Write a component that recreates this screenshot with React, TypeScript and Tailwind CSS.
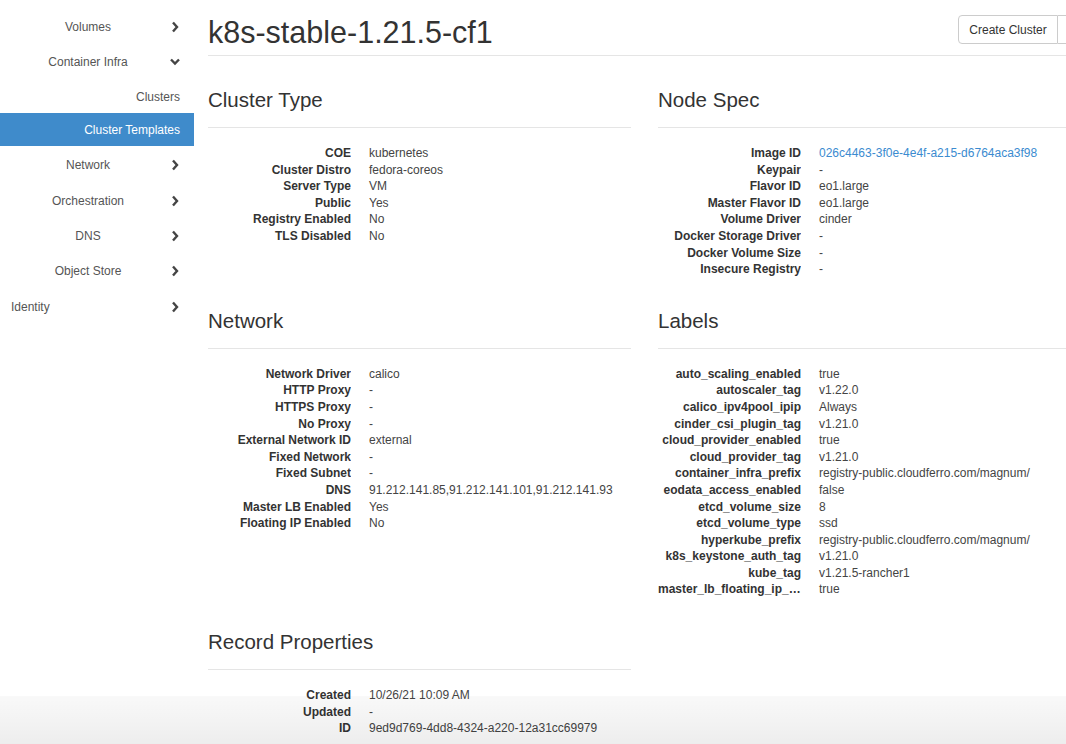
import React from 'react';

type Row = [string, string, boolean?];

const clusterType: Row[] = [
  ['COE', 'kubernetes'],
  ['Cluster Distro', 'fedora-coreos'],
  ['Server Type', 'VM'],
  ['Public', 'Yes'],
  ['Registry Enabled', 'No'],
  ['TLS Disabled', 'No'],
];

const nodeSpec: Row[] = [
  ['Image ID', '026c4463-3f0e-4e4f-a215-d6764aca3f98', true],
  ['Keypair', '-'],
  ['Flavor ID', 'eo1.large'],
  ['Master Flavor ID', 'eo1.large'],
  ['Volume Driver', 'cinder'],
  ['Docker Storage Driver', '-'],
  ['Docker Volume Size', '-'],
  ['Insecure Registry', '-'],
];

const network: Row[] = [
  ['Network Driver', 'calico'],
  ['HTTP Proxy', '-'],
  ['HTTPS Proxy', '-'],
  ['No Proxy', '-'],
  ['External Network ID', 'external'],
  ['Fixed Network', '-'],
  ['Fixed Subnet', '-'],
  ['DNS', '91.212.141.85,91.212.141.101,91.212.141.93'],
  ['Master LB Enabled', 'Yes'],
  ['Floating IP Enabled', 'No'],
];

const labels: Row[] = [
  ['auto_scaling_enabled', 'true'],
  ['autoscaler_tag', 'v1.22.0'],
  ['calico_ipv4pool_ipip', 'Always'],
  ['cinder_csi_plugin_tag', 'v1.21.0'],
  ['cloud_provider_enabled', 'true'],
  ['cloud_provider_tag', 'v1.21.0'],
  ['container_infra_prefix', 'registry-public.cloudferro.com/magnum/'],
  ['eodata_access_enabled', 'false'],
  ['etcd_volume_size', '8'],
  ['etcd_volume_type', 'ssd'],
  ['hyperkube_prefix', 'registry-public.cloudferro.com/magnum/'],
  ['k8s_keystone_auth_tag', 'v1.21.0'],
  ['kube_tag', 'v1.21.5-rancher1'],
  ['master_lb_floating_ip_enabled', 'true'],
];

const record: Row[] = [
  ['Created', '10/26/21 10:09 AM'],
  ['Updated', '-'],
  ['ID', '9ed9d769-4dd8-4324-a220-12a31cc69979'],
];

// small bold chevrons like the font-awesome ones in the sidebar
const Chevron = ({ down }: { down?: boolean }) => (
  <svg width="10" height="12" viewBox="0 0 10 12" className="shrink-0 -ml-[6px]">
    {down ? (
      <polyline points="1,3.5 5,7.5 9,3.5" fill="none" stroke="#444" strokeWidth="2.4" />
    ) : (
      <polyline points="3,1.5 7,6 3,10.5" fill="none" stroke="#444" strokeWidth="2.4" />
    )}
  </svg>
);

const NavGroup = ({ label, open, h = 'h-[35px]' }: { label: string; open?: boolean; h?: string }) => (
  <div className={`flex items-center ${h}`}>
    <span className="w-[176px] text-center">{label}</span>
    <Chevron down={open} />
  </div>
);

const Section = ({ title, rows }: { title: string; rows: Row[] }) => (
  <div className="pt-[32px]">
    <h3 className="text-[20.5px] leading-[24px] text-[#333] pb-[15px] border-b border-[#e5e5e5]">
      {title}
    </h3>
    <dl className="mt-[17px] text-[12px] leading-[16.6px]">
      {rows.map(([k, v, link]) => (
        <div key={k} className="flex">
          <dt className="w-[143px] shrink-0 text-right font-bold text-[#333] truncate">{k}</dt>
          <dd className={`ml-[18px] whitespace-nowrap ${link ? 'text-[#3b8bd0]' : 'text-[#444]'}`}>{v}</dd>
        </div>
      ))}
    </dl>
  </div>
);

export default function App() {
  return (
    <div
      className="relative w-[1066px] h-[744px] overflow-hidden bg-white flex"
      style={{ fontFamily: '"Liberation Sans", Arial, Helvetica, sans-serif' }}
    >
      {/* Sidebar */}
      <aside className="w-[194px] shrink-0 pt-[9px] text-[12px] text-[#555]">
        <NavGroup label="Volumes" />
        <NavGroup label="Container Infra" open h="h-[36px]" />
        <div className="h-[33px] flex items-center justify-end pr-[14px]">Clusters</div>
        <div className="h-[33px] flex items-center justify-end pr-[14px] bg-[#3f8bcb] text-white">
          Cluster Templates
        </div>
        <NavGroup label="Network" h="h-[37px]" />
        <NavGroup label="Orchestration" />
        <NavGroup label="DNS" />
        <NavGroup label="Object Store" h="h-[36px]" />
        <div className="flex items-center h-[35px]">
          <span className="w-[176px] pl-[11px]">Identity</span>
          <Chevron />
        </div>
      </aside>

      {/* Main */}
      <main className="pl-[14px] shrink-0">
        <div className="w-[873px]">
          <div className="h-[56px] border-b border-[#e5e5e5] flex items-start justify-between">
            <h1 className="mt-[14px] text-[30.5px] leading-[36px] text-[#333]">k8s-stable-1.21.5-cf1</h1>
            <div className="mt-[15px] flex text-[12px] text-[#333]">
              <button className="h-[29px] w-[100px] border border-[#ccc] rounded-l-[4px] bg-white">
                Create Cluster
              </button>
              <button className="h-[29px] w-[23px] border border-l-0 border-[#ccc] rounded-r-[4px] bg-white" />
            </div>
          </div>

          <div className="grid grid-cols-2 gap-x-[27px]">
            <Section title="Cluster Type" rows={clusterType} />
            <Section title="Node Spec" rows={nodeSpec} />
            <div className="-mt-[1px]">
              <Section title="Network" rows={network} />
            </div>
            <div className="-mt-[1px]">
              <Section title="Labels" rows={labels} />
            </div>
            <div>
              <Section title="Record Properties" rows={record} />
            </div>
          </div>
        </div>
      </main>

      {/* bottom footer shade */}
      <div className="absolute left-0 right-0 bottom-0 h-[48px] pointer-events-none bg-gradient-to-b from-black/[0.025] to-black/[0.07]" />
    </div>
  );
}
